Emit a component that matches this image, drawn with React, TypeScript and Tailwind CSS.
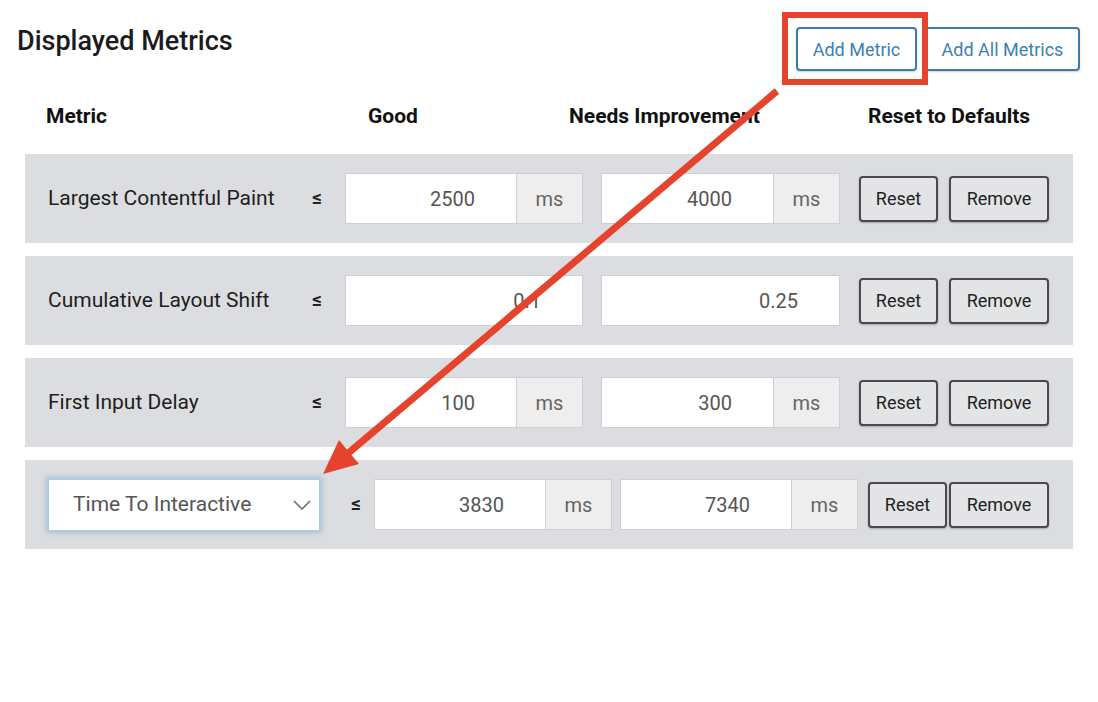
import React from "react";

function InputGroup({ value, unit, width }: { value: string; unit?: string; width: string }) {
  return (
    <div className={`flex h-[51px] border border-[#cfcfcf] bg-white ${width}`}>
      <div className="flex-1 flex items-center justify-end pr-[41px] text-[20px] text-[#555]">{value}</div>
      {unit && (
        <div className="w-[66px] flex items-center justify-center bg-[#eeeeee] border-l border-[#cfcfcf] text-[20px] text-[#666]">
          {unit}
        </div>
      )}
    </div>
  );
}

function Btn({ label, width }: { label: string; width: string }) {
  return (
    <div
      className={`h-[46px] flex items-center justify-center rounded-[4px] border-[2.5px] border-[#4a4a4c] bg-[#e3e4e6] text-[18px] text-[#222] shadow-[0_1px_2px_rgba(0,0,0,0.25)] ${width}`}
    >
      {label}
    </div>
  );
}

function MetricRow({ label, good, ni, unit }: { label: string; good: string; ni: string; unit?: string }) {
  return (
    <div className="h-[89px] bg-[#dcdde0] flex items-center pl-[23px]">
      <div className="w-[264px] text-[21px] text-[#1e1e1e]">{label}</div>
      <div className="w-[33px] text-[19px] font-bold text-[#222]">≤</div>
      <InputGroup value={good} unit={unit} width="w-[238px]" />
      <div className="w-[18px]" />
      <InputGroup value={ni} unit={unit} width="w-[239px]" />
      <div className="w-[19px]" />
      <Btn label="Reset" width="w-[79px]" />
      <div className="w-[11px]" />
      <Btn label="Remove" width="w-[100px]" />
    </div>
  );
}

export default function App() {
  return (
    <div className="relative w-[1098px] h-[702px] bg-white font-['Roboto',sans-serif] overflow-hidden">
      <div className="flex items-start justify-between pl-[17px] pr-[18px] pt-[27px]">
        <h1 className="text-[27px] font-medium text-[#1b1b1b] leading-[28px]">Displayed Metrics</h1>
        <div className="flex gap-[8px]">
          <div className="w-[121px] h-[44px] flex items-center justify-center rounded-[4px] border-2 border-[#3e7bab] text-[18px] text-[#3d7fb3] shadow-[0_1px_2px_rgba(0,0,0,0.2)]">
            Add Metric
          </div>
          <div className="w-[155px] h-[44px] flex items-center justify-center rounded-[4px] border-2 border-[#3e7bab] text-[18px] text-[#3d7fb3] shadow-[0_1px_2px_rgba(0,0,0,0.2)]">
            Add All Metrics
          </div>
        </div>
      </div>

      <div className="flex items-center h-[30px] mt-[31px] pl-[46px] text-[21px] font-bold text-[#111]">
        <div className="w-[322px]">Metric</div>
        <div className="w-[201px]">Good</div>
        <div className="w-[299px]">Needs Improvement</div>
        <div>Reset to Defaults</div>
      </div>

      <div className="mx-[25px] mt-[22px] flex flex-col gap-[13px]">
        <MetricRow label="Largest Contentful Paint" good="2500" ni="4000" unit="ms" />
        <MetricRow label="Cumulative Layout Shift" good="0.1" ni="0.25" />
        <MetricRow label="First Input Delay" good="100" ni="300" unit="ms" />
        <div className="h-[89px] bg-[#dcdde0] flex items-center pl-[23px]">
          <div className="w-[272px] h-[52px] bg-white border border-[#a9cbe0] shadow-[0_0_5px_2px_rgba(100,160,200,0.45)] flex items-center justify-between pl-[24px] pr-[7px]">
            <span className="text-[21px] text-[#555]">Time To Interactive</span>
            <svg width="20" height="12" viewBox="0 0 20 12" fill="none">
              <path d="M2 2 L10 10 L18 2" stroke="#666" strokeWidth="1.5" />
            </svg>
          </div>
          <div className="w-[31px]" />
          <div className="w-[23px] text-[19px] font-bold text-[#222]">≤</div>
          <InputGroup value="3830" unit="ms" width="w-[238px]" />
          <div className="w-[8px]" />
          <InputGroup value="7340" unit="ms" width="w-[238px]" />
          <div className="w-[10px]" />
          <Btn label="Reset" width="w-[79px]" />
          <div className="w-[2px]" />
          <Btn label="Remove" width="w-[100px]" />
        </div>
      </div>

      <div className="absolute left-[782px] top-[12px] w-[146px] h-[73px] border-[6px] border-[#e5432d]" />
      <svg className="absolute left-0 top-0 pointer-events-none" width="1098" height="702" viewBox="0 0 1098 702">
        <line x1="777" y1="91" x2="346" y2="455" stroke="#e5432d" strokeWidth="7" />
        <polygon points="323,474 339,440 359,464" fill="#e5432d" />
      </svg>
    </div>
  );
}
